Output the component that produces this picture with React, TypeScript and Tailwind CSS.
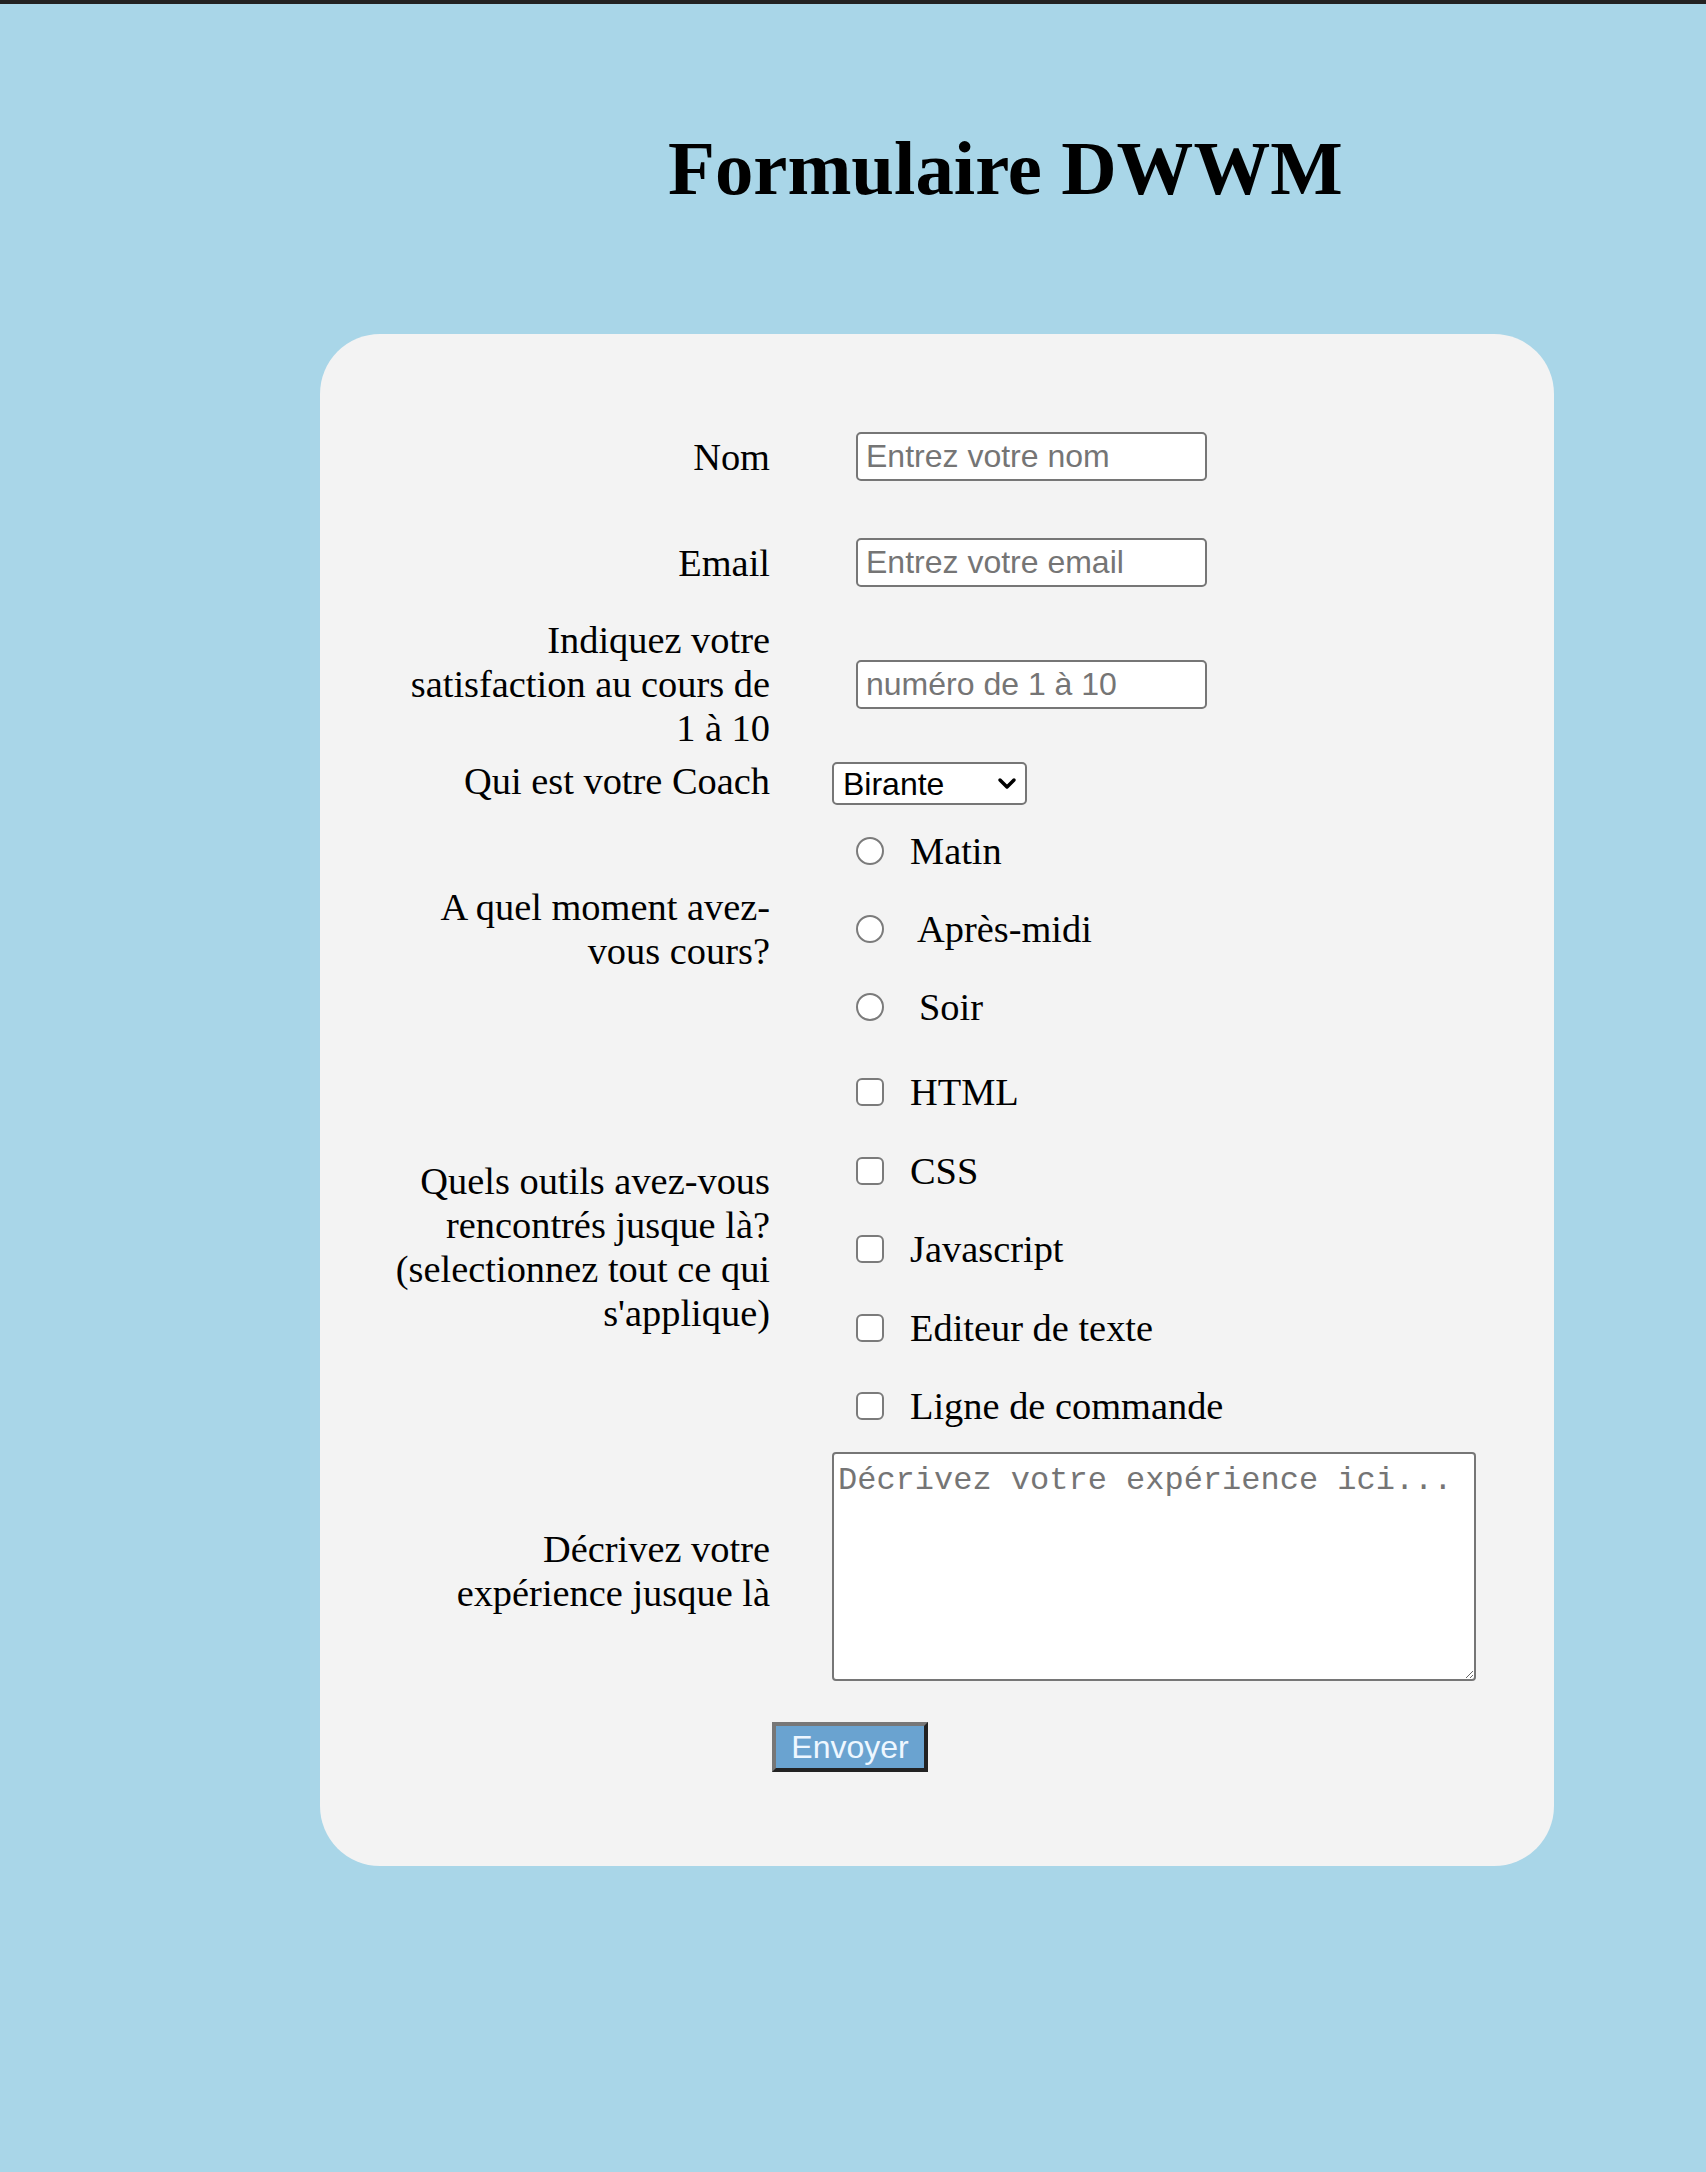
import React from "react";

const labelCls =
  "w-[378px] shrink-0 text-right text-[38.4px] leading-[44px] whitespace-nowrap";
const textInputCls =
  "ml-[24px] w-[351px] h-[49px] border-2 border-[#767676] rounded-[5px] bg-white pl-[8px] text-[32px] font-['Liberation_Sans',Arial,sans-serif] text-black placeholder:text-[#757575] outline-none";
const radioCls =
  "appearance-none m-0 ml-[24px] w-[28px] h-[28px] shrink-0 rounded-full border-2 border-[#7b7b7b] bg-white";
const checkCls =
  "appearance-none m-0 ml-[24px] w-[28px] h-[28px] shrink-0 rounded-[6px] border-2 border-[#7b7b7b] bg-white";
const optTextCls = "text-[38.4px] leading-[44px] whitespace-nowrap";

export default function App() {
  return (
    <div className="min-h-[2172px] bg-[#a9d6e8] font-['Liberation_Serif','Times_New_Roman',serif] text-black">
      <div className="h-[4px] bg-[#222222]" />
      <h1 className="mt-[121px] ml-[668px] text-[76.8px] leading-[88px] font-bold whitespace-nowrap">
        Formulaire DWWM
      </h1>
      <form className="mt-[121px] ml-[320px] w-[1234px] rounded-[60px] bg-[#f3f3f3] pt-[98px] pb-[94px] pl-[72px]">
        {/* Nom */}
        <div className="flex items-center h-[49px]">
          <label className={labelCls}>Nom</label>
          <div className="ml-[62px] flex items-center">
            <input type="text" placeholder="Entrez votre nom" className={textInputCls} />
          </div>
        </div>
        {/* Email */}
        <div className="mt-[57px] flex items-center h-[49px]">
          <label className={labelCls}>Email</label>
          <div className="ml-[62px] flex items-center">
            <input type="email" placeholder="Entrez votre email" className={textInputCls} />
          </div>
        </div>
        {/* Satisfaction */}
        <div className="mt-[31px] flex items-center">
          <label className={labelCls}>
            Indiquez votre
            <br />
            satisfaction au cours de
            <br />1 à 10
          </label>
          <div className="ml-[62px] flex items-center">
            <input type="text" placeholder="numéro de 1 à 10" className={textInputCls} />
          </div>
        </div>
        {/* Coach */}
        <div className="mt-[9px] flex items-start">
          <label className={labelCls}>Qui est votre Coach</label>
          <div className="ml-[62px] mt-[3px] relative">
            <select
              defaultValue="Birante"
              className="appearance-none block w-[195px] h-[43px] border-2 border-[#767676] rounded-[5px] bg-white pl-[9px] text-[32px] leading-none font-['Liberation_Sans',Arial,sans-serif] text-black outline-none"
            >
              <option>Birante</option>
              <option>Autre</option>
            </select>
            <svg
              className="absolute right-[10px] top-[15px] pointer-events-none"
              width="20"
              height="13"
              viewBox="0 0 20 13"
            >
              <path
                d="M3 3 L10 10 L17 3"
                stroke="black"
                strokeWidth="3.5"
                fill="none"
                strokeLinecap="round"
                strokeLinejoin="round"
              />
            </svg>
          </div>
        </div>
        {/* Moment */}
        <div className="mt-[24px] flex items-center">
          <label className={labelCls}>
            A quel moment avez-
            <br />
            vous cours?
          </label>
          <div className="ml-[62px] flex flex-col gap-[34px]">
            <label className="flex items-center h-[44px]">
              <input type="radio" name="moment" className={radioCls} />
              <span className={`ml-[26px] ${optTextCls}`}>Matin</span>
            </label>
            <label className="flex items-center h-[44px]">
              <input type="radio" name="moment" className={radioCls} />
              <span className={`ml-[33px] ${optTextCls}`}>Après-midi</span>
            </label>
            <label className="flex items-center h-[44px]">
              <input type="radio" name="moment" className={radioCls} />
              <span className={`ml-[35px] ${optTextCls}`}>Soir</span>
            </label>
          </div>
        </div>
        {/* Outils */}
        <div className="mt-[41px] flex items-center">
          <label className={`${labelCls} mb-[5px]`}>
            Quels outils avez-vous
            <br />
            rencontrés jusque là?
            <br />
            (selectionnez tout ce qui
            <br />
            s'applique)
          </label>
          <div className="ml-[62px] flex flex-col gap-[34.5px]">
            {["HTML", "CSS", "Javascript", "Editeur de texte", "Ligne de commande"].map((t) => (
              <label key={t} className="flex items-center h-[44px]">
                <input type="checkbox" className={checkCls} />
                <span className={`ml-[26px] ${optTextCls}`}>{t}</span>
              </label>
            ))}
          </div>
        </div>
        {/* Experience */}
        <div className="mt-[24px] flex items-center">
          <label className={`${labelCls} mt-[8px]`}>
            Décrivez votre
            <br />
            expérience jusque là
          </label>
          <div className="ml-[62px]">
            <textarea
              placeholder="Décrivez votre expérience ici..."
              className="block w-[644px] h-[229px] border-2 border-[#767676] rounded-[4px] bg-white px-[4px] pt-[3px] text-[32px] font-['Liberation_Mono','Courier_New',monospace] text-black placeholder:text-[#757575] outline-none"
            />
          </div>
        </div>
        {/* Button */}
        <div className="mt-[41px] flex">
          <button
            type="button"
            className="ml-[380px] w-[156px] h-[50px] bg-[#6aa3d0] border-[4px] border-t-[#777777] border-l-[#777777] border-b-[#222222] border-r-[#222222] text-[32px] leading-none text-[#eef7ff] font-['Liberation_Sans',Arial,sans-serif]"
          >
            Envoyer
          </button>
        </div>
      </form>
    </div>
  );
}
